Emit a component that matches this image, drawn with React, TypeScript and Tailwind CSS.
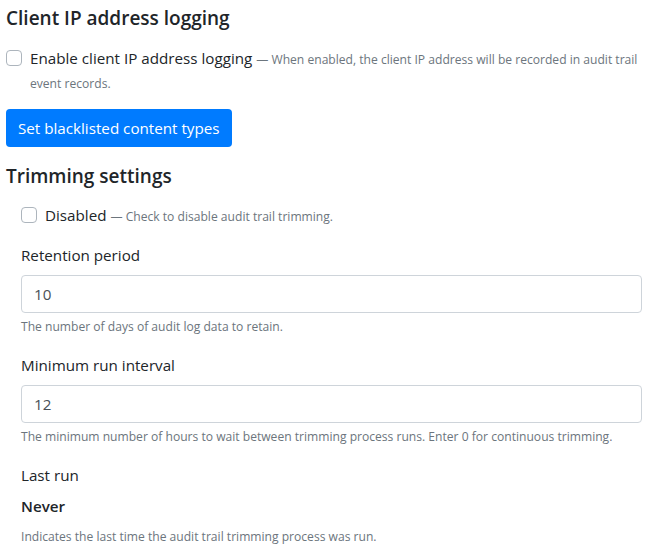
import React from "react";

const font = { fontFamily: '"Open Sans", "Noto Sans", sans-serif' };

const Hint = ({ children }: { children: React.ReactNode }) => (
  <div className="mt-[4px] text-[12.1px] leading-[20px] text-[#6c757d]">{children}</div>
);

const Check = ({ label, hint }: { label: string; hint: string }) => (
  <label className="flex items-start gap-2">
    <span className="mt-[4px] block h-4 w-4 shrink-0 rounded-[4px] border border-[#adb5bd] bg-white" />
    <span className="text-[15.2px] leading-[24px] text-[#212529]">
      {label}{" "}
      <span className="text-[12.1px] leading-none text-[#6c757d]">— {hint}</span>
    </span>
  </label>
);

const Field = ({ label, value, hint }: { label: string; value: string; hint: string }) => (
  <div className="mb-4">
    <div className="mb-2 text-[15.2px] leading-[24px] text-[#212529]">{label}</div>
    <div className="flex h-[38px] items-center rounded-[4px] border border-[#ced4da] bg-white px-3 text-[15.2px] text-[#495057]">
      {value}
    </div>
    <Hint>{hint}</Hint>
  </div>
);

export default function App() {
  return (
    <div className="min-h-screen bg-white px-[6px] pt-[6px]" style={font}>
      <h5 className="mb-4 text-[19px] font-semibold leading-[24px] text-[#212529]">Client IP address logging</h5>
      <div className="mb-[15px] pr-[14px]">
        <Check
          label="Enable client IP address logging"
          hint="When enabled, the client IP address will be recorded in audit trail event records."
        />
      </div>
      <button className="mb-[17px] block h-[38px] rounded-[4px] bg-[#007bff] px-3 text-[15.2px] text-white">
        Set blacklisted content types
      </button>
      <h5 className="mb-[15px] text-[19px] font-semibold leading-[24px] text-[#212529]">Trimming settings</h5>
      <div className="pl-[15px] pr-[14px]">
        <div className="mb-4">
          <Check label="Disabled" hint="Check to disable audit trail trimming." />
        </div>
        <Field label="Retention period" value="10" hint="The number of days of audit log data to retain." />
        <Field
          label="Minimum run interval"
          value="12"
          hint="The minimum number of hours to wait between trimming process runs. Enter 0 for continuous trimming."
        />
        <div className="mb-[7px] text-[15.2px] leading-[24px] text-[#212529]">Last run</div>
        <div className="text-[15.2px] font-semibold leading-[24px] text-[#212529]">Never</div>
        <div className="mt-[9px] text-[12.1px] leading-[20px] text-[#6c757d]">
          Indicates the last time the audit trail trimming process was run.
        </div>
      </div>
    </div>
  );
}
